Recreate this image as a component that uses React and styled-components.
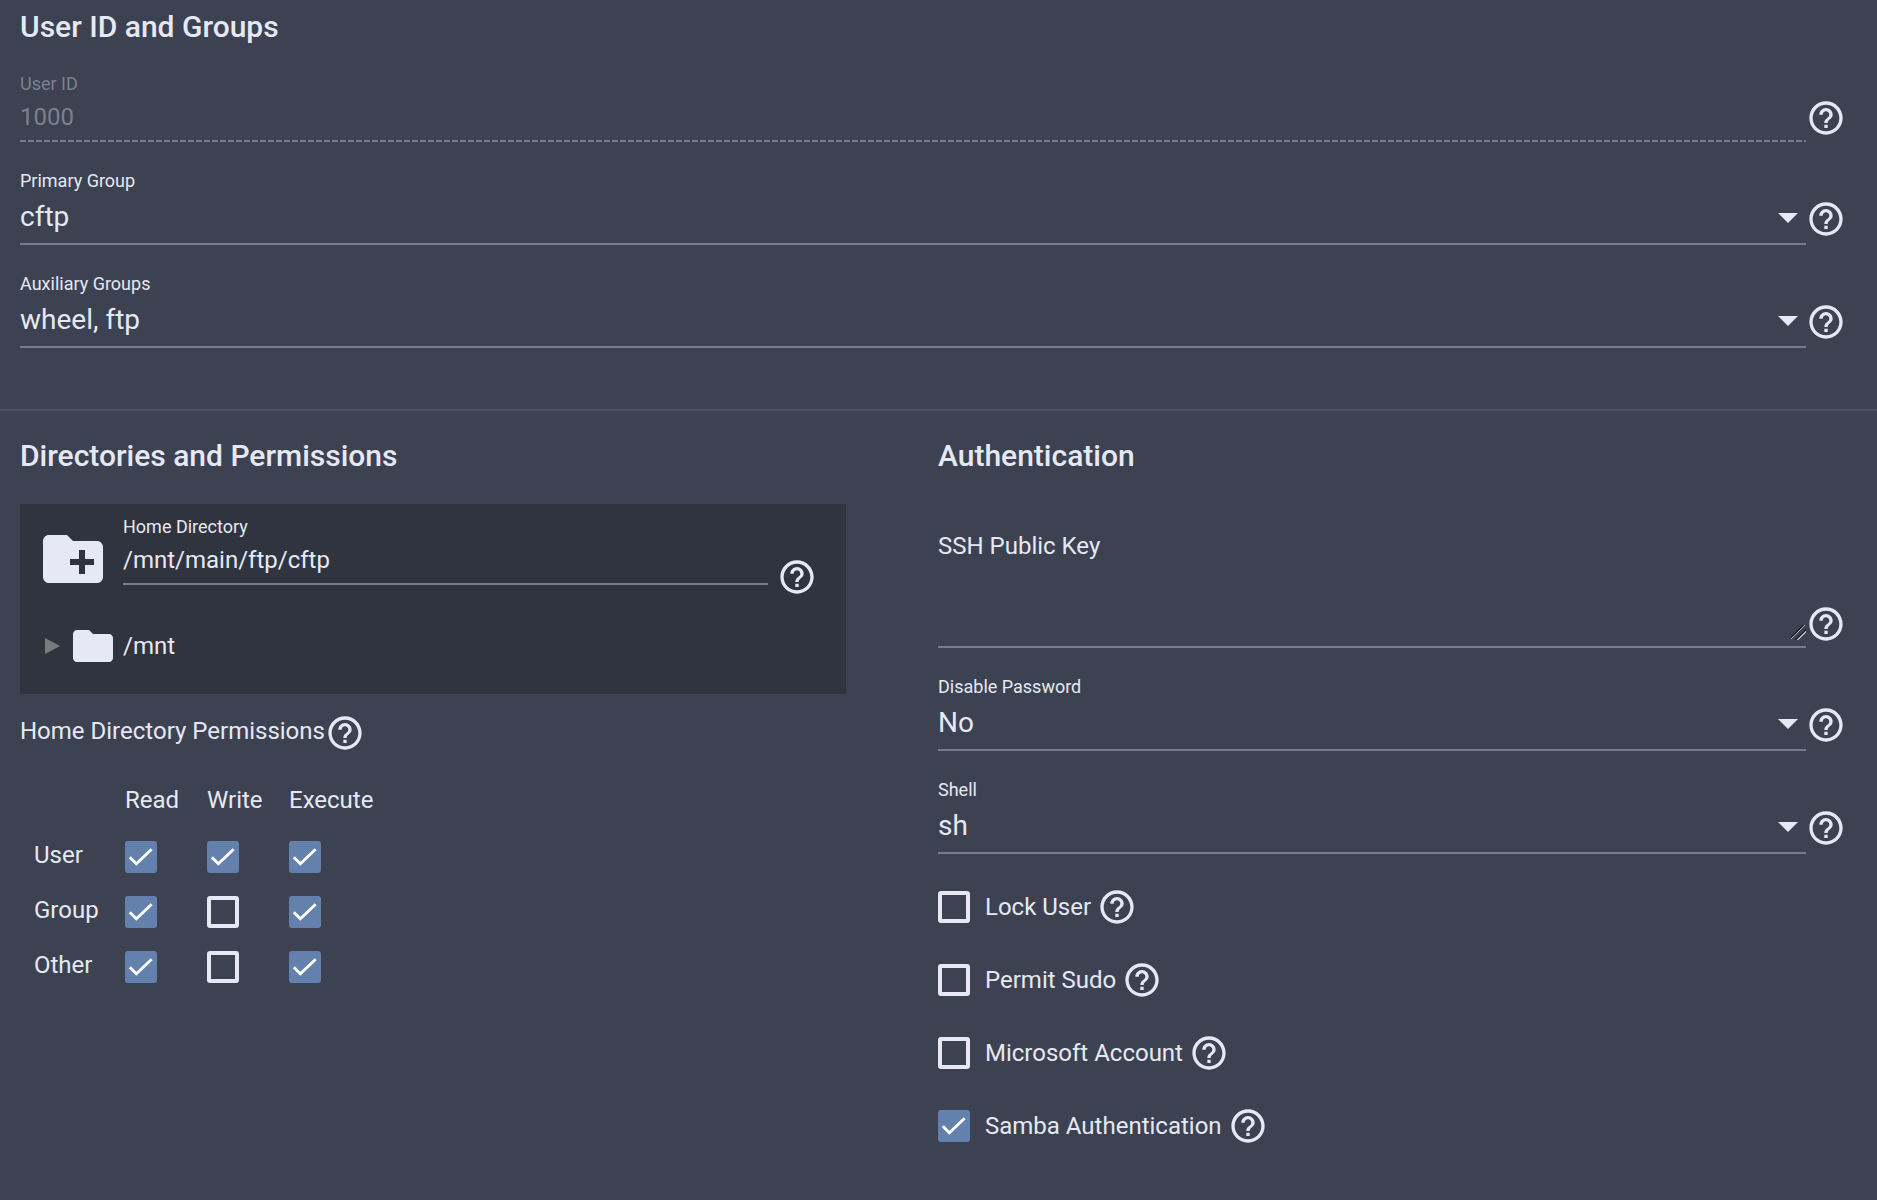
import React, { useId } from "react";
import styled, { createGlobalStyle, ThemeProvider } from "styled-components";

const theme = {
  bg: "#3c4252",
  panel: "#30343f",
  text: "#e6e9f3",
  muted: "#7c808d",
  line: "#777c8b",
  divider: "#4d5262",
  primary: "#6481ad",
  caret: "#7b7b7e",
};

const GlobalStyle = createGlobalStyle`
  * { box-sizing: border-box; }
  body {
    margin: 0;
    background: ${theme.bg};
    color: ${theme.text};
    font: 400 24px/32px Roboto, "Liberation Sans", sans-serif;
  }
  button, input, select, textarea { font: inherit; color: inherit; }
`;

const Page = styled.form`
  min-height: 100vh;
`;

const Section = styled.section`
  padding: ${(p) => p.$top}px 31px ${(p) => p.$bottom}px 20px;
`;

const Columns = styled(Section)`
  display: grid;
  grid-template-columns: 1fr 1fr;
  column-gap: 10px;
`;

const Column = styled.div`
  min-width: 0;
  padding-right: ${(p) => (p.$inset ? 82 : 0)}px;
`;

const Title = styled.h2`
  margin: 0;
  font-size: 30px;
  line-height: 36px;
  font-weight: 500;
`;

const Divider = styled.hr`
  height: 2px;
  margin: 0;
  border: 0;
  background: ${(p) => p.theme.divider};
`;

const Fields = styled.div`
  display: flex;
  flex-direction: column;
  gap: 27px;
  margin-top: ${(p) => p.$top}px;
`;

const FieldRow = styled.div`
  display: flex;
  align-items: flex-end;
`;

const FieldBody = styled.div`
  flex: 1;
  min-width: 0;
  display: flex;
  flex-direction: column;
`;

const Label = styled.label`
  font-size: ${(p) => (p.$large ? 24 : 18)}px;
  line-height: ${(p) => (p.$large ? 32 : 24)}px;
  color: ${(p) => (p.$muted ? p.theme.muted : "inherit")};
`;

const TextInput = styled.input`
  width: 100%;
  height: 46px;
  padding: 0 0 2px;
  border: 0;
  border-bottom: 2px solid ${(p) => p.theme.line};
  border-radius: 0;
  background: none;
  outline: none;

  &:disabled {
    padding-bottom: 4px;
    border: 0;
    color: ${(p) => p.theme.muted};
    background: repeating-linear-gradient(
        90deg,
        ${(p) => p.theme.line} 0 6px,
        transparent 6px 8px
      )
      left bottom / 100% 2px no-repeat;
  }
`;

const SelectBox = styled.div`
  display: grid;
  align-items: center;
  border-bottom: 2px solid ${(p) => p.theme.line};

  > * { grid-area: 1 / 1; }
`;

const NativeSelect = styled.select`
  appearance: none;
  width: 100%;
  height: 50px;
  padding: 0 40px 2px 0;
  border: 0;
  background: none;
  font-size: 28px;
  outline: none;

  option { color: #222; }
`;

const Arrow = styled.svg`
  justify-self: end;
  margin-right: 8px;
  pointer-events: none;
  fill: ${(p) => p.theme.text};
`;

const TextAreaBox = styled.div`
  display: flex;
  padding-bottom: 6px;
  border-bottom: 2px solid ${(p) => p.theme.line};
`;

const TextArea = styled.textarea`
  flex: 1;
  height: 78px;
  padding: 0;
  border: 0;
  background: none;
  resize: vertical;
  outline: none;

  &::-webkit-resizer {
    background: linear-gradient(
      135deg,
      transparent 37%,
      #20222b 37% 44%,
      #b4b6bd 44% 50%,
      transparent 50% 63%,
      #20222b 63% 70%,
      #b4b6bd 70% 76%,
      transparent 76%
    );
  }
`;

const HelpButton = styled.button`
  flex: none;
  display: flex;
  padding: 0;
  margin-bottom: ${(p) => p.$lift || 0}px;
  border: 0;
  background: none;
  cursor: pointer;
`;

const Icon = styled.svg`
  display: block;
  flex: none;
  fill: currentColor;
`;

const Explorer = styled.div`
  margin-top: 30px;
  padding: 11px 29px 24px 17px;
  background: ${(p) => p.theme.panel};
`;

const ExplorerHead = styled.div`
  display: flex;
  align-items: flex-end;
`;

const HomeIconSlot = styled.span`
  padding-bottom: 2px;
`;

const ExplorerField = styled(FieldBody)`
  margin: 0 9px 12px 14px;
`;

const TreeRow = styled.div`
  display: flex;
  align-items: center;
  margin-top: 25px;
  padding-left: 8px;
`;

const Toggle = styled.button`
  display: flex;
  margin-right: 9px;
  padding: 0;
  border: 0;
  background: none;
  color: ${(p) => p.theme.caret};
`;

const TreeName = styled.span`
  margin-left: 6px;
`;

const PermissionsHeading = styled.div`
  display: flex;
  align-items: center;
  margin-top: 19px;

  > span { padding-bottom: 4px; }
`;

const PermissionsTable = styled.table`
  margin-top: 17px;
  border-collapse: collapse;
  table-layout: fixed;
  width: 351px;

  th, td {
    height: 55px;
    padding: 0;
    font-weight: 400;
    text-align: left;
    vertical-align: middle;
  }
  thead th { height: 59px; }
  tbody th { padding: 0 0 4px 14px; }
  col:first-child { width: 105px; }
  col { width: 82px; }
`;

const CheckWrap = styled.span`
  display: grid;
  flex: none;
  width: 32px;
  height: 32px;

  > * { grid-area: 1 / 1; }
`;

const CheckInput = styled.input`
  appearance: none;
  width: 32px;
  height: 32px;
  margin: 0;
  border: 4px solid ${(p) => p.theme.text};
  border-radius: 3px;

  &:checked {
    border-color: ${(p) => p.theme.primary};
    background: ${(p) => p.theme.primary};
  }
  & + svg { visibility: hidden; }
  &:checked + svg { visibility: visible; }
`;

const CheckMark = styled.svg`
  pointer-events: none;
  fill: none;
  stroke: #fff;
  stroke-width: 2.1;
`;

const Options = styled.div`
  display: flex;
  flex-direction: column;
  gap: 33px;
  margin-top: 33px;
`;

const OptionRow = styled.div`
  display: flex;
  align-items: center;
  gap: 6px;
`;

const OptionLabel = styled.label`
  display: flex;
  align-items: center;
  gap: 15px;
`;

function Help({ topic, lift }) {
  return (
    <HelpButton type="button" aria-label={`Help: ${topic}`} $lift={lift}>
      <Icon width="40" height="40" viewBox="0 0 24 24" aria-hidden="true">
        <path d="M11 18h2v-2h-2v2zm1-16C6.48 2 2 6.48 2 12s4.48 10 10 10 10-4.48 10-10S17.52 2 12 2zm0 18c-4.41 0-8-3.59-8-8s3.59-8 8-8 8 3.59 8 8-3.59 8-8 8zm0-14c-2.21 0-4 1.79-4 4h2c0-1.1.9-2 2-2s2 .9 2 2c0 2-3 1.75-3 5h2c0-2.25 3-2.5 3-5 0-2.21-1.79-4-4-4z" />
      </Icon>
    </HelpButton>
  );
}

function SelectField({ label, value }) {
  const id = useId();
  return (
    <FieldRow>
      <FieldBody>
        <Label htmlFor={id}>{label}</Label>
        <SelectBox>
          <NativeSelect id={id} defaultValue={value}>
            <option>{value}</option>
          </NativeSelect>
          <Arrow width="20" height="10" viewBox="0 0 20 10" aria-hidden="true">
            <path d="M0 0h20L10 10z" />
          </Arrow>
        </SelectBox>
      </FieldBody>
      <Help topic={label} lift={6} />
    </FieldRow>
  );
}

function Checkbox(props) {
  return (
    <CheckWrap>
      <CheckInput type="checkbox" {...props} />
      <CheckMark width="32" height="32" viewBox="0 0 24 24" aria-hidden="true">
        <path d="M3.6 12.2 8.5 17.1 20 6.2" />
      </CheckMark>
    </CheckWrap>
  );
}

function Option({ label, checked }) {
  return (
    <OptionRow>
      <OptionLabel>
        <Checkbox defaultChecked={checked} />
        {label}
      </OptionLabel>
      <Help topic={label} />
    </OptionRow>
  );
}

const MODES = ["Read", "Write", "Execute"];
const PERMISSIONS = [
  { who: "User", granted: [true, true, true] },
  { who: "Group", granted: [true, false, true] },
  { who: "Other", granted: [true, false, true] },
];
const OPTIONS = [
  { label: "Lock User", checked: false },
  { label: "Permit Sudo", checked: false },
  { label: "Microsoft Account", checked: false },
  { label: "Samba Authentication", checked: true },
];

export default function App() {
  return (
    <ThemeProvider theme={theme}>
      <GlobalStyle />
      <Page>
        <Section $top={9} $bottom={61}>
          <Title>User ID and Groups</Title>
          <Fields $top={27}>
            <FieldRow>
              <FieldBody>
                <Label htmlFor="uid" $muted>User ID</Label>
                <TextInput id="uid" defaultValue="1000" disabled />
              </FieldBody>
              <Help topic="User ID" lift={4} />
            </FieldRow>
            <SelectField label="Primary Group" value="cftp" />
            <SelectField label="Auxiliary Groups" value="wheel, ftp" />
          </Fields>
        </Section>

        <Divider />

        <Columns $top={27} $bottom={40}>
          <Column $inset>
            <Title>Directories and Permissions</Title>
            <Explorer>
              <ExplorerHead>
                <HomeIconSlot>
                  <Icon width="72" height="72" viewBox="0 0 24 24" aria-hidden="true">
                    <path d="M20 6h-8l-2-2H4c-1.11 0-1.99.89-1.99 2L2 18c0 1.11.89 2 2 2h16c1.11 0 2-.89 2-2V8c0-1.11-.89-2-2-2zm-1 8h-3v3h-2v-3h-3v-2h3V9h2v3h3v2z" />
                  </Icon>
                </HomeIconSlot>
                <ExplorerField>
                  <Label htmlFor="home">Home Directory</Label>
                  <TextInput id="home" defaultValue="/mnt/main/ftp/cftp" />
                </ExplorerField>
                <Help topic="Home Directory" />
              </ExplorerHead>
              <TreeRow>
                <Toggle type="button" aria-label="Expand /mnt">
                  <Icon width="15" height="16" viewBox="0 0 15 16" aria-hidden="true">
                    <path d="M0 0 15 8 0 16z" />
                  </Icon>
                </Toggle>
                <Icon width="48" height="48" viewBox="0 0 24 24" aria-hidden="true">
                  <path d="M10 4H4c-1.1 0-1.99.9-1.99 2L2 18c0 1.1.9 2 2 2h16c1.1 0 2-.9 2-2V8c0-1.1-.9-2-2-2h-8l-2-2z" />
                </Icon>
                <TreeName>/mnt</TreeName>
              </TreeRow>
            </Explorer>

            <PermissionsHeading>
              <span id="permissions">Home Directory Permissions</span>
              <Help topic="Home Directory Permissions" />
            </PermissionsHeading>
            <PermissionsTable aria-labelledby="permissions">
              <colgroup>
                <col />
                <col />
                <col />
                <col />
              </colgroup>
              <thead>
                <tr>
                  <td />
                  {MODES.map((mode) => (
                    <th key={mode} scope="col">{mode}</th>
                  ))}
                </tr>
              </thead>
              <tbody>
                {PERMISSIONS.map(({ who, granted }) => (
                  <tr key={who}>
                    <th scope="row">{who}</th>
                    {granted.map((on, i) => (
                      <td key={MODES[i]}>
                        <Checkbox defaultChecked={on} aria-label={`${who} ${MODES[i]}`} />
                      </td>
                    ))}
                  </tr>
                ))}
              </tbody>
            </PermissionsTable>
          </Column>

          <Column>
            <Title>Authentication</Title>
            <Fields $top={56}>
              <FieldRow>
                <FieldBody>
                  <Label htmlFor="ssh" $large>SSH Public Key</Label>
                  <TextAreaBox>
                    <TextArea id="ssh" />
                  </TextAreaBox>
                </FieldBody>
                <Help topic="SSH Public Key" lift={4} />
              </FieldRow>
              <SelectField label="Disable Password" value="No" />
              <SelectField label="Shell" value="sh" />
            </Fields>
            <Options>
              {OPTIONS.map((option) => (
                <Option key={option.label} {...option} />
              ))}
            </Options>
          </Column>
        </Columns>
      </Page>
    </ThemeProvider>
  );
}
